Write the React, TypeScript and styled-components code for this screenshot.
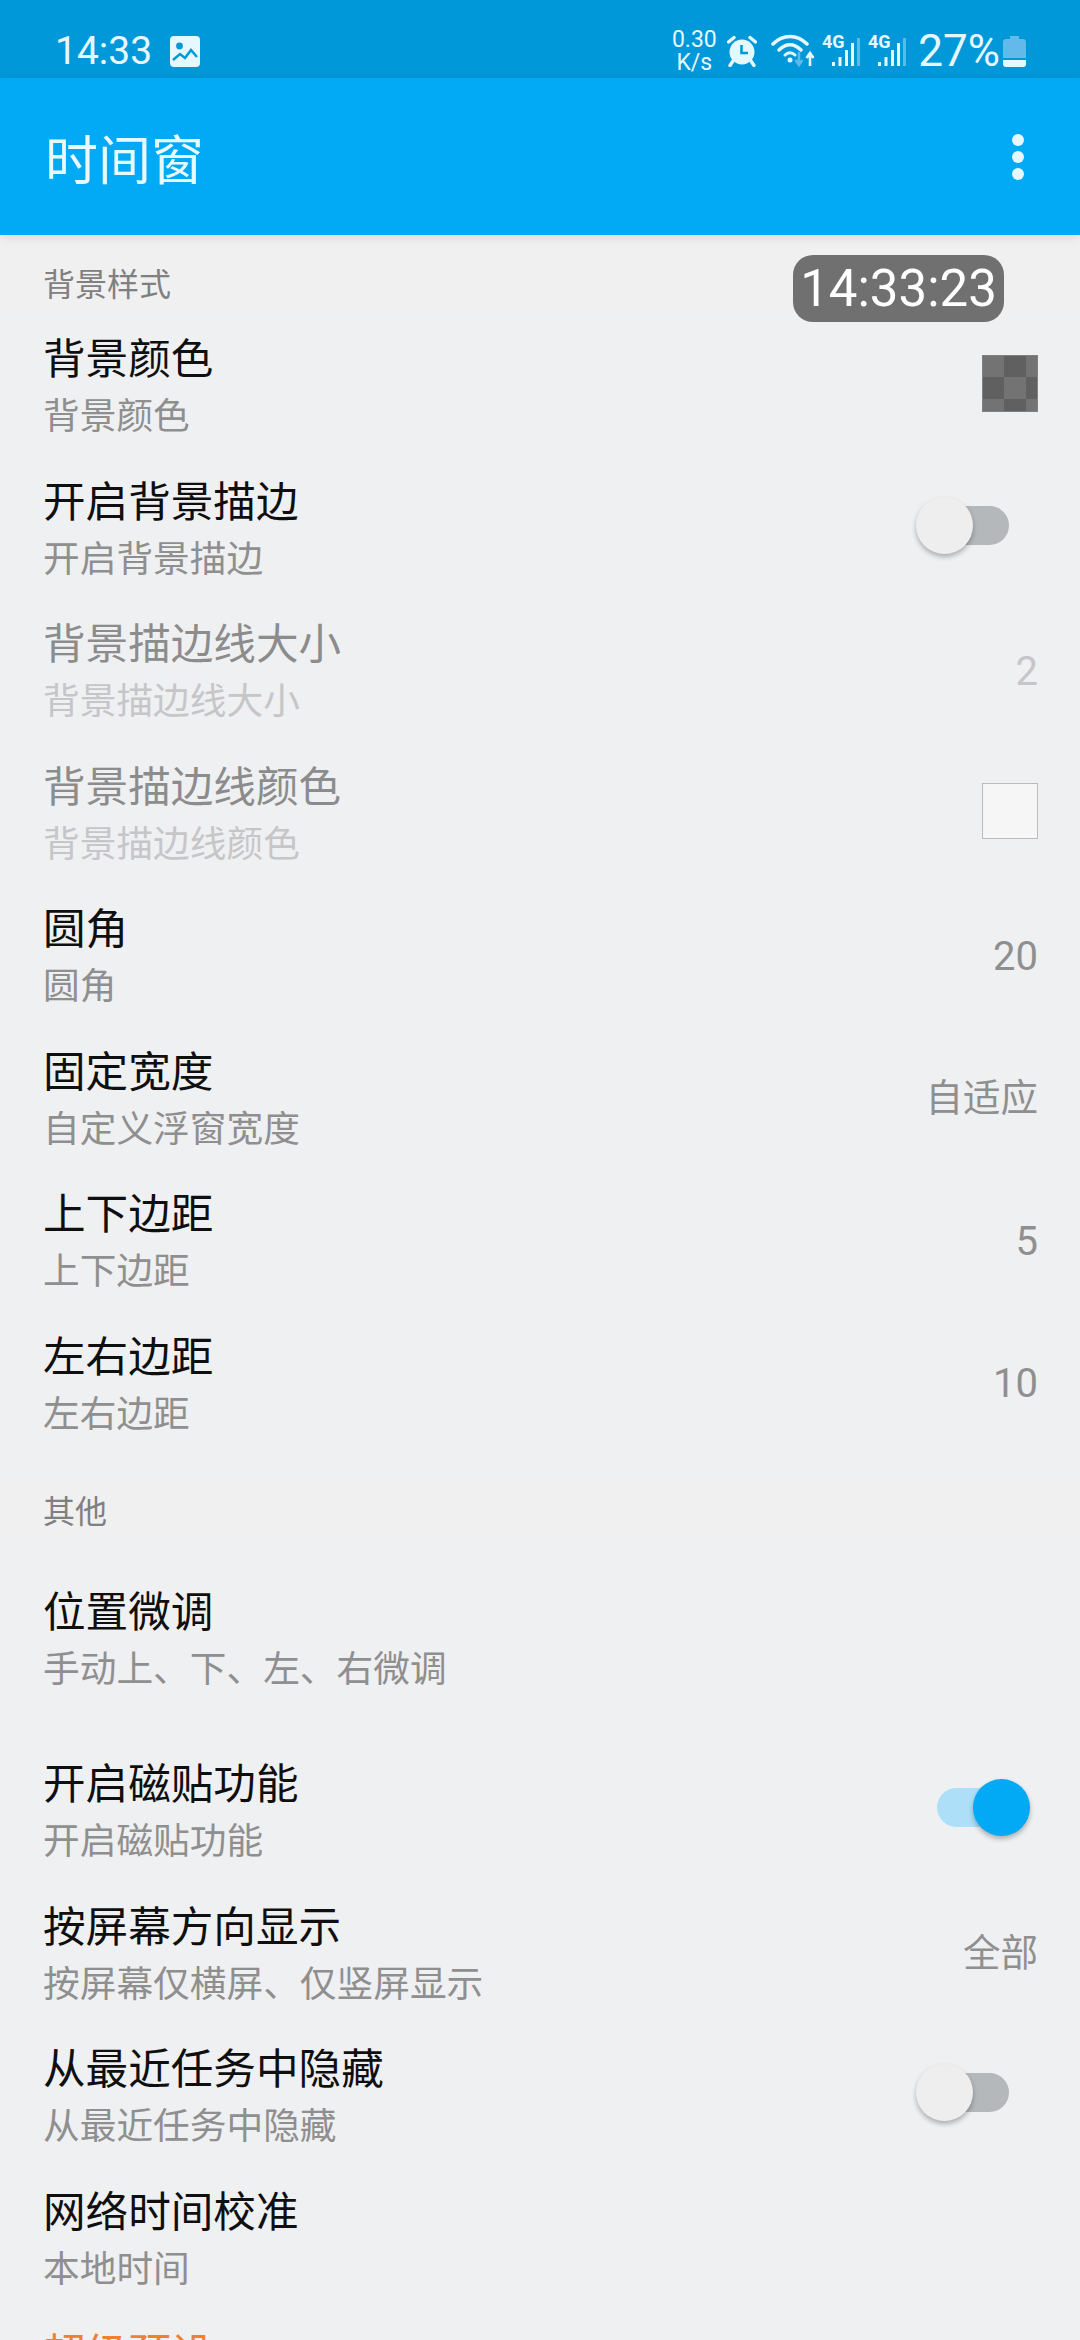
import styled, { createGlobalStyle } from 'styled-components'

const GlobalStyle = createGlobalStyle`
    html, body {
        margin: 0;
        padding: 0;
        background-color: #eff0f2;
    }
    body {
        font-family: Roboto, "Noto Sans CJK SC", sans-serif;
    }
`

const Page = styled.div`
    position: relative;
    width: 1080px;
    height: 2340px;
    overflow: hidden;
    background-color: #eff0f2;
`

const StatusBar = styled.div`
    height: 78px;
    box-sizing: border-box;
    padding: 23px 54px 0 55px;
    display: flex;
    align-items: flex-start;
    justify-content: space-between;
    background-color: #0098d9;
    color: #e6f8ff;
`

const StatusGroup = styled.div`
    display: flex;
    align-items: center;
    height: 56px;
`

const Clock = styled.span`
    font-size: 39px;
    line-height: 56px;
    margin-right: 18px;
`

const Speed = styled.div`
    width: 48px;
    margin-right: 9px;
    font-size: 23px;
    line-height: 23px;
    text-align: center;
`

const Battery = styled.span`
    font-size: 44px;
    line-height: 56px;
    margin: 0 3px 0 12px;
`

const StatusIcon = styled.svg`
    display: block;
    flex: none;
`

const AppBar = styled.div`
    position: relative;
    height: 157px;
    box-sizing: border-box;
    padding: 0 56px 0 45px;
    display: flex;
    align-items: center;
    justify-content: space-between;
    background-color: #02a9f5;
    box-shadow: 0 2px 10px rgba(0, 0, 0, 0.1);
    color: #e8f9ff;
    font-size: 53px;
`

const MoreButton = styled.div`
    display: flex;
    flex-direction: column;
    gap: 5px;
`

const MoreDot = styled.div`
    width: 12px;
    height: 12px;
    border-radius: 50%;
    background-color: #e6f7ff;
`

const SectionHeader = styled.div<{ $first?: boolean }>`
    height: ${(p) => (p.$first ? 75 : 58)}px;
    margin: ${(p) => (p.$first ? '0 0 5px' : '25px 0 0')};
    box-sizing: border-box;
    padding: ${(p) => (p.$first ? '32px' : '14px')} 43px 0;
    background-color: #f0f0f0;
    color: #808080;
    font-size: 32px;
    line-height: 36px;
`

const Row = styled.div<{ $tall?: boolean }>`
    height: ${(p) => (p.$tall ? 202 : 142.5)}px;
    box-sizing: border-box;
    padding: 0 42px 0 43px;
    display: flex;
    align-items: center;
    justify-content: space-between;
`

const RowText = styled.div`
    min-width: 0;
    margin-top: 4px;
`

const Title = styled.div<{ $disabled?: boolean; $accent?: boolean }>`
    font-size: 42.6px;
    line-height: 57px;
    color: ${(p) => (p.$accent ? '#f07f2e' : p.$disabled ? '#8c8c8c' : '#0f0f0f')};
`

const Summary = styled.div<{ $disabled?: boolean }>`
    min-height: 57px;
    font-size: 36.7px;
    line-height: 57px;
    color: ${(p) => (p.$disabled ? '#c6c6c8' : '#8f8f8f')};
`

const Value = styled.div<{ $disabled?: boolean; $numeric?: boolean }>`
    margin-top: ${(p) => (p.$numeric ? 0 : -8)}px;
    font-size: ${(p) => (p.$numeric ? 40 : 37.5)}px;
    color: ${(p) => (p.$disabled ? '#c6c6c8' : '#8f8f8f')};
`

const CheckerSwatch = styled.div`
    width: 56px;
    height: 57px;
    margin-top: -6px;
    background-color: #737373;
    background-image: conic-gradient(#606060 25%, transparent 25% 50%, #606060 50% 75%, transparent 75%);
    background-size: 44px 44px;
    box-shadow: inset 0 0 0 1px #808080;
`

const EmptySwatch = styled.div`
    width: 56px;
    height: 56px;
    box-sizing: border-box;
    margin-top: -6px;
    background-color: #f6f6f7;
    border: 1px solid #bcbcbe;
`

const SwitchTrack = styled.div<{ $on?: boolean }>`
    position: relative;
    width: 72px;
    height: 39px;
    margin: -7px 29px 0 0;
    border-radius: 20px;
    background-color: ${(p) => (p.$on ? '#aedff8' : '#b5b8bb')};
`

const SwitchThumb = styled.div<{ $on?: boolean }>`
    position: absolute;
    top: -9px;
    left: ${(p) => (p.$on ? '36px' : '-21px')};
    width: 57px;
    height: 57px;
    border-radius: 50%;
    background-color: ${(p) => (p.$on ? '#02a9f5' : '#eeeeee')};
    box-shadow: 0 3px 5px rgba(0, 0, 0, 0.28);
`

const FloatingClock = styled.div`
    position: absolute;
    top: 255px;
    left: 793px;
    width: 211px;
    height: 67px;
    border-radius: 20px;
    display: flex;
    align-items: center;
    justify-content: center;
    background-color: #707070;
    color: #ffffff;
    font-size: 51px;
`

function ImageIcon() {
    return (
        <StatusIcon width="30" height="31" viewBox="0 0 30 31">
            <rect width="30" height="31" rx="4" fill="#e6f8ff" />
            <circle cx="9.500" cy="10" r="3.400" fill="#0098d9" />
            <path d="M3 24 L10 18 L15 22 L21 14 L27 21" stroke="#0098d9" strokeWidth="2.500" fill="none" />
        </StatusIcon>
    )
}

function AlarmIcon() {
    return (
        <StatusIcon width="30" height="32" viewBox="0 0 30 32" style={{ marginRight: 14 }}>
            <circle cx="15" cy="17" r="12.500" fill="#e6f8ff" />
            <path d="M14.500 10 V18 H21" stroke="#0098d9" strokeWidth="2.600" fill="none" />
            <path d="M1.500 7 L7 2.500 M28.500 7 L23 2.500 M6 26 L3 30.500 M24 26 L27 30.500" stroke="#e6f8ff" strokeWidth="3.400" strokeLinecap="round" />
        </StatusIcon>
    )
}

function WifiIcon() {
    return (
        <StatusIcon width="44" height="34" viewBox="0 0 44 34" style={{ marginRight: 7 }}>
            <path d="M2 10 C 12 0, 26 0, 36 10" stroke="#e6f8ff" strokeWidth="3.500" fill="none" strokeLinecap="round" />
            <path d="M8 16 C 15 9, 23 9, 30 16" stroke="#e6f8ff" strokeWidth="3.500" fill="none" strokeLinecap="round" />
            <path d="M14 21 C 17 18, 21 18, 24 21" stroke="#e6f8ff" strokeWidth="3" fill="none" strokeLinecap="round" />
            <circle cx="19" cy="26" r="2.500" fill="#e6f8ff" />
            <path d="M28 18 V30 M24.500 26 L28 31 L31.500 26" stroke="#5fb8ea" strokeWidth="2.600" fill="none" />
            <path d="M39 32 V20 M35.500 24 L39 19 L42.500 24" stroke="#e6f8ff" strokeWidth="2.600" fill="none" />
        </StatusIcon>
    )
}

function SignalIcon({ gap }: { gap?: number }) {
    return (
        <StatusIcon width="38" height="37" viewBox="0 -5 38 37" style={{ marginRight: gap, marginTop: -5 }}>
            <text x="0" y="13" fontFamily="Roboto, sans-serif" fontWeight="700" fontSize="18" fill="#e6f8ff">4G</text>
            <rect x="10" y="27" width="3" height="4" fill="#e6f8ff" />
            <rect x="16.500" y="22" width="3" height="9" fill="#e6f8ff" />
            <rect x="23" y="15" width="3" height="16" fill="#e6f8ff" />
            <rect x="29" y="8" width="3" height="23" fill="#e6f8ff" />
            <rect x="35" y="3" width="3" height="28" fill="#5fb8ea" />
        </StatusIcon>
    )
}

function BatteryIcon() {
    return (
        <StatusIcon width="23" height="31" viewBox="0 0 23 31">
            <path d="M7 0 H16 V3 H20 Q23 3 23 6 V22 H0 V6 Q0 3 3 3 H7 Z" fill="#62b9ea" />
            <path d="M0 24 H23 V28 Q23 31 20 31 H3 Q0 31 0 28 Z" fill="#e6f8ff" />
        </StatusIcon>
    )
}

function Switch({ on }: { on?: boolean }) {
    return (
        <SwitchTrack $on={on}>
            <SwitchThumb $on={on} />
        </SwitchTrack>
    )
}

type Setting = {
    title: string
    summary?: string
    value?: string
    widget?: 'checker' | 'empty' | 'off' | 'on'
    disabled?: boolean
    accent?: boolean
    tall?: boolean
}

const styleSettings: Setting[] = [
    { title: '背景颜色', summary: '背景颜色', widget: 'checker' },
    { title: '开启背景描边', summary: '开启背景描边', widget: 'off' },
    { title: '背景描边线大小', summary: '背景描边线大小', value: '2', disabled: true },
    { title: '背景描边线颜色', summary: '背景描边线颜色', widget: 'empty', disabled: true },
    { title: '圆角', summary: '圆角', value: '20' },
    { title: '固定宽度', summary: '自定义浮窗宽度', value: '自适应' },
    { title: '上下边距', summary: '上下边距', value: '5' },
    { title: '左右边距', summary: '左右边距', value: '10' },
]

const otherSettings: Setting[] = [
    { title: '位置微调', summary: '手动上、下、左、右微调', tall: true },
    { title: '开启磁贴功能', summary: '开启磁贴功能', widget: 'on' },
    { title: '按屏幕方向显示', summary: '按屏幕仅横屏、仅竖屏显示', value: '全部' },
    { title: '从最近任务中隐藏', summary: '从最近任务中隐藏', widget: 'off' },
    { title: '网络时间校准', summary: '本地时间' },
    { title: '超级预设', accent: true },
]

function SettingRow({ item }: { item: Setting }) {
    return (
        <Row $tall={item.tall}>
            <RowText>
                <Title $disabled={item.disabled} $accent={item.accent}>{item.title}</Title>
                <Summary $disabled={item.disabled}>{item.summary}</Summary>
            </RowText>
            {item.value && (
                <Value $disabled={item.disabled} $numeric={/^\d+$/.test(item.value)}>{item.value}</Value>
            )}
            {item.widget === 'checker' && <CheckerSwatch />}
            {item.widget === 'empty' && <EmptySwatch />}
            {item.widget === 'off' && <Switch />}
            {item.widget === 'on' && <Switch on />}
        </Row>
    )
}

export default function App() {
    return (
        <Page>
            <GlobalStyle />
            <StatusBar>
                <StatusGroup>
                    <Clock>14:33</Clock>
                    <ImageIcon />
                </StatusGroup>
                <StatusGroup>
                    <Speed>0.30<br />K/s</Speed>
                    <AlarmIcon />
                    <WifiIcon />
                    <SignalIcon gap={8} />
                    <SignalIcon />
                    <Battery>27%</Battery>
                    <BatteryIcon />
                </StatusGroup>
            </StatusBar>
            <AppBar>
                <span>时间窗</span>
                <MoreButton>
                    <MoreDot />
                    <MoreDot />
                    <MoreDot />
                </MoreButton>
            </AppBar>
            <SectionHeader $first>背景样式</SectionHeader>
            {styleSettings.map((item) => <SettingRow key={item.title} item={item} />)}
            <SectionHeader>其他</SectionHeader>
            {otherSettings.map((item) => <SettingRow key={item.title} item={item} />)}
            <FloatingClock>14:33:23</FloatingClock>
        </Page>
    )
}
